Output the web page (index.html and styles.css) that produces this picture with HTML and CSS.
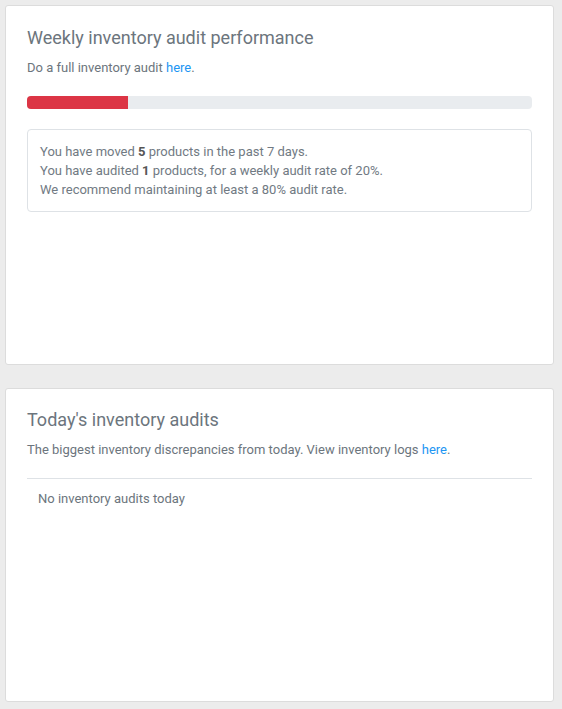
FILE: index.html
```html
<!DOCTYPE html>
<html>
<head>
<meta charset="utf-8">
<link rel="stylesheet" href="styles.css">
</head>
<body>
<div class="page">
  <section class="card card-weekly">
    <h2 class="card-title">Weekly inventory audit performance</h2>
    <p class="card-sub">Do a full inventory audit <a href="#" class="link">here</a>.</p>
    <div class="progress"><div class="progress-bar" style="width:20%"></div></div>
    <div class="info-box">
      <div>You have moved <b>5</b> products in the past 7 days.</div>
      <div>You have audited <b>1</b> products, for a weekly audit rate of 20%.</div>
      <div>We recommend maintaining at least a 80% audit rate.</div>
    </div>
  </section>
  <section class="card card-today">
    <h2 class="card-title">Today's inventory audits</h2>
    <p class="card-sub">The biggest inventory discrepancies from today. View inventory logs <a href="#" class="link">here</a>.</p>
    <div class="list">
      <div class="list-empty">No inventory audits today</div>
    </div>
  </section>
</div>
</body>
</html>
```

FILE: styles.css
```css
html, body {
  margin: 0;
  padding: 0;
  background: #ececec;
  font-family: Roboto, "Liberation Sans", sans-serif;
}
.page {
  padding: 5px 8px 0 5px;
  display: flex;
  flex-direction: column;
  gap: 23px;
}
.card {
  background: #fff;
  border: 1px solid #dcdcdc;
  border-radius: 3px;
  padding: 20px 21px;
  box-sizing: border-box;
}
.card-weekly { height: 360px; }
.card-today { height: 314px; padding-top: 19px; }
.card-title {
  margin: 0;
  font-size: 18px;
  font-weight: 400;
  line-height: 24px;
  color: #6c757d;
}
.card-sub {
  margin: 8px 0 0;
  font-size: 13px;
  line-height: 19px;
  color: #6c757d;
}
.link {
  color: #2196f3;
  text-decoration: none;
}
.progress {
  margin-top: 19px;
  height: 13px;
  background: #e9ecef;
  border-radius: 4px;
  overflow: hidden;
}
.progress-bar {
  height: 100%;
  background: #dc3545;
}
.info-box {
  margin-top: 20px;
  border: 1px solid #dee2e6;
  border-radius: 4px;
  padding: 12px;
  font-size: 13px;
  line-height: 19px;
  color: #717a83;
}
.info-box b {
  font-weight: 700;
  color: #555;
}
.list {
  margin-top: 19px;
  border-top: 1px solid #dee2e6;
}
.list-empty {
  padding: 10px 11px;
  font-size: 13px;
  line-height: 19px;
  color: #6c757d;
}
```
